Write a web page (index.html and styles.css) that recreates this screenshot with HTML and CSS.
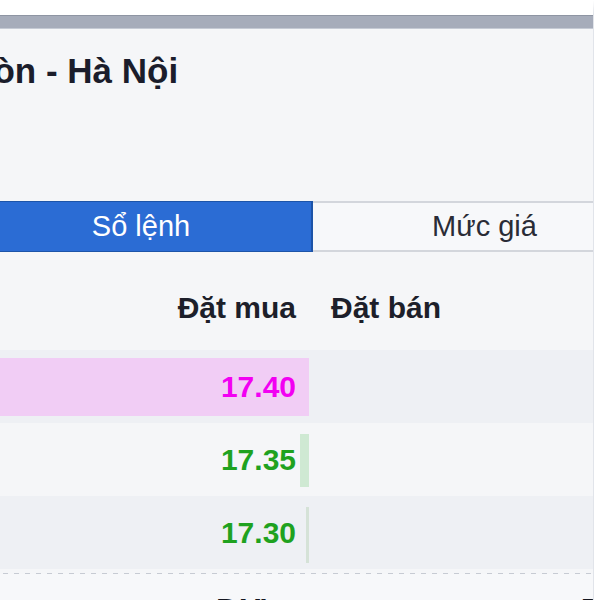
FILE: index.html
```html
<!DOCTYPE html>
<html lang="vi">
<head>
<meta charset="utf-8">
<link rel="stylesheet" href="styles.css">
</head>
<body>
<div class="frame">
  <div class="topbar"></div>
  <div class="panel">
    <h1 class="title">Sài Gòn - Hà Nội</h1>
    <div class="tabs">
      <div class="tab active">Sổ lệnh</div>
      <div class="tab">Mức giá</div>
    </div>
    <div class="book">
      <div class="row head">
        <div class="cell buy">Đặt mua</div>
        <div class="cell sell">Đặt bán</div>
      </div>
      <div class="row odd">
        <div class="cell buy"><span class="bar pink" style="width:339px"></span><span class="num ceil">17.40</span></div>
        <div class="cell sell"></div>
      </div>
      <div class="row">
        <div class="cell buy"><span class="bar green" style="width:9px"></span><span class="num up">17.35</span></div>
        <div class="cell sell"></div>
      </div>
      <div class="row odd">
        <div class="cell buy"><span class="bar green thin" style="width:3px"></span><span class="num up">17.30</span></div>
        <div class="cell sell"></div>
      </div>
    </div>
    <div class="dash"></div>
    <div class="foot">
      <span class="foot-label">DƯ</span>
      <span class="foot-right">Đ</span>
    </div>
  </div>
</div>
</body>
</html>
```

FILE: styles.css
```css
html, body {
  margin: 0;
  padding: 0;
  background: #ffffff;
}

body {
  font-family: "Liberation Sans", Arial, sans-serif;
  color: #1d1f2a;
}

.frame {
  width: 594px;
  height: 600px;
  overflow: hidden;
  border-right: 1px solid #e1e4ea;
  background: #f5f6f8;
  border-top: 15px solid #ffffff;
  box-sizing: border-box;
}

.topbar {
  height: 14px;
  background: #a6acba;
  border-top: 1px solid #8e95a3;
  border-bottom: 1px solid #c5cad4;
  box-sizing: border-box;
}

.panel {
  margin-left: -30px;
  width: 686px;
}

.title {
  margin: 22px 0 0 -66px;
  font-size: 35px;
  line-height: 40px;
  font-weight: bold;
  color: #1b1d2b;
  white-space: nowrap;
}

.tabs {
  margin-top: 110px;
  display: grid;
  grid-template-columns: 343px 343px;
  height: 51px;
}

.tab {
  display: flex;
  align-items: center;
  justify-content: center;
  font-size: 29px;
  color: #2a2c36;
  background: #f7f8fa;
  border-top: 2px solid #d3d6dc;
  border-bottom: 2px solid #d3d6dc;
  box-sizing: border-box;
}

.tab.active {
  background: #2b6cd4;
  color: #ffffff;
  border: 1px solid #1d54a8;
  border-right: 2px solid #1d54a8;
}

.row {
  display: grid;
  grid-template-columns: 339px 1fr;
  height: 73px;
}

.row.odd {
  background: #eef0f4;
}

.row.head {
  height: 98px;
  padding: 38px 0 24px;
  box-sizing: border-box;
  font-size: 30px;
  line-height: 36px;
  font-weight: bold;
  color: #1d1f2a;
}

.cell.buy {
  position: relative;
  display: flex;
  align-items: center;
  justify-content: flex-end;
  padding-right: 13px;
}

.cell.sell {
  padding-left: 22px;
}

.bar {
  position: absolute;
  right: 0;
  top: 8px;
  bottom: 7px;
}

.bar.pink {
  background: #f1cdf5;
}

.bar.green {
  background: #cfe9d3;
  top: 11px;
  bottom: 9px;
}

.bar.green.thin {
  background: #d5e2d7;
  top: 11px;
  bottom: 6px;
}

.num {
  position: relative;
  font-size: 30px;
  font-weight: bold;
}

.num.ceil {
  color: #f200f2;
}

.num.up {
  color: #1fa21f;
}

.dash {
  margin-top: 4px;
  height: 1px;
  background: repeating-linear-gradient(to right, #c7cbd3 0 5px, transparent 5px 11px);
}

.foot {
  display: flex;
  align-items: flex-start;
  height: 40px;
  padding: 18px 0 0 246px;
  box-sizing: border-box;
  background: #f7f8fa;
  font-size: 32px;
  font-weight: bold;
  line-height: 36px;
  color: #14161f;
}

.foot-right {
  margin-left: 315px;
}
```
